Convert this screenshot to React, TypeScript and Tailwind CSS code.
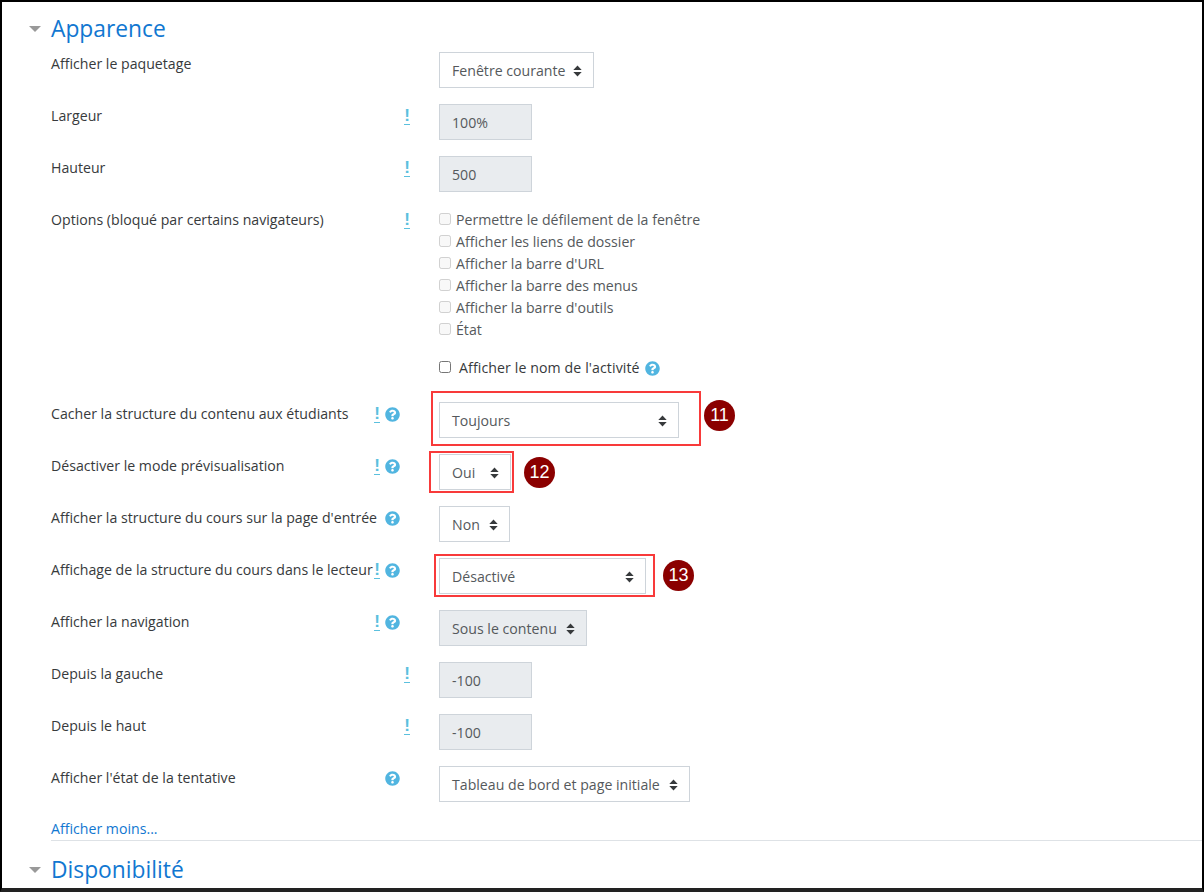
import React from 'react';
import { FaQuestionCircle } from 'react-icons/fa';

const Caret = () => (
  <svg width="9" height="12" viewBox="0 0 9 12" className="shrink-0 fill-[#373a3c]">
    <path d="M4.5 0.5 L8.7 5 H0.3 Z M0.3 7 H8.7 L4.5 11.5 Z" />
  </svg>
);

const Exclaim = () => (
  <span className="mt-[1px] w-[6px] h-[17px] flex justify-center font-['Liberation_Sans',sans-serif] text-[17px] leading-[16px] font-bold text-[#5bc0de] border-b border-dashed border-[#5bc0de]">
    !
  </span>
);

const Help = () => <FaQuestionCircle className="w-[15px] h-[15px] text-[#51b5e0]" />;

const Select = ({ label, width, disabled }: { label: string; width: string; disabled?: boolean }) => (
  <div
    className={`${width} h-9 flex items-center justify-between pl-3 pr-[11px] pt-[1px] border border-[#ced4da] text-[14.15px] text-[#55595c] ${
      disabled ? 'bg-[#e9ecef]' : 'bg-white'
    }`}
  >
    <span className="whitespace-nowrap">{label}</span>
    <Caret />
  </div>
);

const TextInput = ({ value }: { value: string }) => (
  <div className="w-[93px] h-9 flex items-center pl-3 pt-[1px] border border-[#ced4da] bg-[#e9ecef] text-[14.15px] text-[#55595c]">
    {value}
  </div>
);

const Row = ({
  label,
  exclaim,
  help,
  children,
}: {
  label: string;
  exclaim?: boolean;
  help?: boolean;
  children: React.ReactNode;
}) => (
  <div className="flex mb-4 pl-[49px]">
    <div className="w-[323px] shrink-0 pt-[3px] text-[14.15px] leading-[18px] text-[#373a3c] whitespace-nowrap">{label}</div>
    <div className={`w-[65px] shrink-0 flex items-start pt-[3px] ${exclaim && help ? 'gap-[5px]' : help ? 'pl-[11px]' : 'pl-[30px]'}`}>
      {exclaim && <Exclaim />}
      {help && (
        <span className="pt-[2px]">
          <Help />
        </span>
      )}
    </div>
    <div>{children}</div>
  </div>
);

// red annotation frame + numbered badge from the original doc screenshot
const Callout = ({ frame, badge, num }: { frame: string; badge: string; num: string }) => (
  <>
    <div className={`absolute border-2 border-[#f83a3a] ${frame}`} />
    <div
      className={`absolute w-[31px] h-[31px] rounded-full bg-[#8b0000] text-white flex items-center justify-center text-[18px] font-['Liberation_Sans',sans-serif] ${badge}`}
    >
      {num}
    </div>
  </>
);

const Check = ({ label }: { label: string }) => (
  <label className="h-[22px] flex items-center text-[14.15px] text-[#55595c] whitespace-nowrap">
    <input type="checkbox" disabled className="w-[12px] h-[12px] mr-[5px] m-0" />
    <span className="pt-[1px]">{label}</span>
  </label>
);

const SectionTitle = ({ title }: { title: string }) => (
  <div className="flex items-center">
    <div className="ml-[27px] w-0 h-0 border-x-[6px] border-x-transparent border-t-[6px] border-t-[#999999]" />
    <h3 className="ml-[10px] text-[22.8px] leading-[28px] text-[#1177d1]">{title}</h3>
  </div>
);

export default function App() {
  return (
    <div className="w-[1204px] h-[892px] overflow-hidden bg-white border-x-2 border-t-2 border-b-4 border-x-black border-t-black border-b-[#222222] font-['Open_Sans',sans-serif]">
      <div className="h-[50px] pt-[13px]">
        <SectionTitle title="Apparence" />
      </div>

      <Row label="Afficher le paquetage">
        <Select label="Fenêtre courante" width="w-[155px]" />
      </Row>
      <Row label="Largeur" exclaim>
        <TextInput value="100%" />
      </Row>
      <Row label="Hauteur" exclaim>
        <TextInput value="500" />
      </Row>
      <Row label="Options (bloqué par certains navigateurs)" exclaim>
        <div className="h-[178px]">
          <Check label="Permettre le défilement de la fenêtre" />
          <Check label="Afficher les liens de dossier" />
          <Check label="Afficher la barre d'URL" />
          <Check label="Afficher la barre des menus" />
          <Check label="Afficher la barre d'outils" />
          <Check label="État" />
          <div className="mt-4 h-[22px] flex items-center text-[14.15px] text-[#373a3c] whitespace-nowrap">
            <input type="checkbox" className="w-[12px] h-[12px] mr-[8px] m-0" />
            <span className="pt-[1px] tracking-[0.007em]">Afficher le nom de l'activité</span>
            <span className="ml-[5px] pt-[2px]">
              <Help />
            </span>
          </div>
        </div>
      </Row>
      <Row label="Cacher la structure du contenu aux étudiants" exclaim help>
        <div className="relative">
          <Select label="Toujours" width="w-[240px]" />
          <Callout frame="-left-[8px] -top-[11px] w-[270px] h-[55px]" badge="left-[265px] -top-[2px]" num="11" />
        </div>
      </Row>
      <Row label="Désactiver le mode prévisualisation" exclaim help>
        <div className="relative">
          <Select label="Oui" width="w-[72px]" />
          <Callout frame="-left-[10px] -top-[3px] w-[85px] h-[42px]" badge="left-[85px] top-[3px]" num="12" />
        </div>
      </Row>
      <Row label="Afficher la structure du cours sur la page d'entrée" help>
        <Select label="Non" width="w-[71px]" />
      </Row>
      <Row label="Affichage de la structure du cours dans le lecteur" exclaim help>
        <div className="relative">
          <Select label="Désactivé" width="w-[207px]" />
          <Callout frame="-left-[5px] -top-[4px] w-[221px] h-[43px]" badge="left-[224px] top-[2px]" num="13" />
        </div>
      </Row>
      <Row label="Afficher la navigation" exclaim help>
        <Select label="Sous le contenu" width="w-[148px]" disabled />
      </Row>
      <Row label="Depuis la gauche" exclaim>
        <TextInput value="-100" />
      </Row>
      <Row label="Depuis le haut" exclaim>
        <TextInput value="-100" />
      </Row>
      <Row label="Afficher l'état de la tentative" help>
        <Select label="Tableau de bord et page initiale" width="w-[251px]" />
      </Row>

      <div className="ml-[49px] h-[23px] text-[14.15px] leading-[22px] text-[#1177d1] border-b border-[#dee2e6]">
        Afficher moins...
      </div>
      <div className="pt-[15px]">
        <SectionTitle title="Disponibilité" />
      </div>
    </div>
  );
}
